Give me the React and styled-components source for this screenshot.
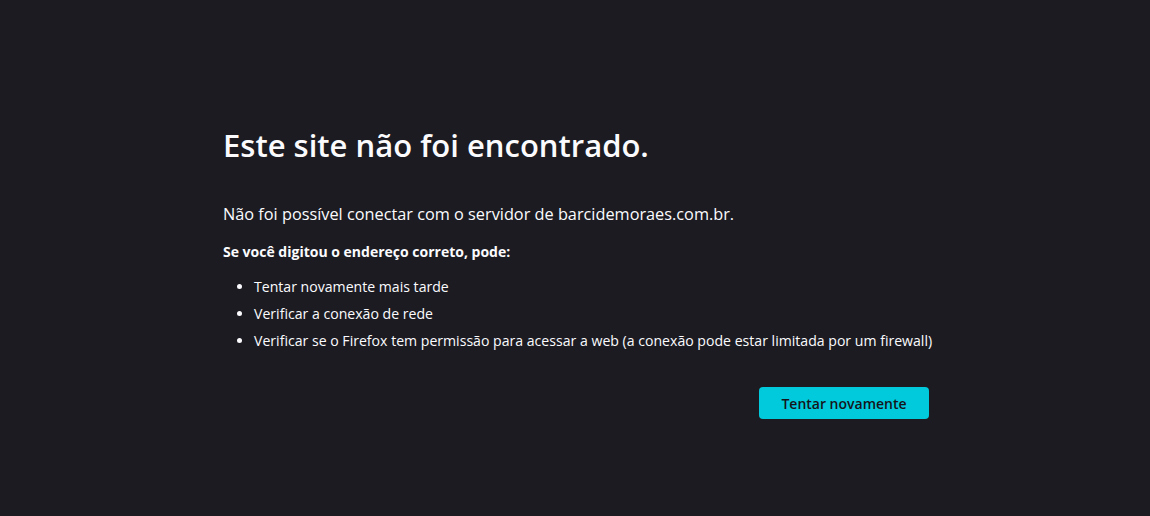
import React from "react";
import styled, { createGlobalStyle } from "styled-components";

const Global = createGlobalStyle`
  html, body { margin: 0; padding: 0; background: #1c1b22; }
  body { font-family: "Open Sans", "Noto Sans", sans-serif; color: #fbfbfe; }
`;

const Page = styled.main`
  min-height: 516px;
  box-sizing: border-box;
  padding: 122px 0 0 223px;
`;

const Container = styled.div`
  width: 706px;
  display: flex;
  flex-direction: column;
`;

const Title = styled.h1`
  margin: 0;
  font-size: 31px;
  font-weight: 600;
  line-height: 46px;
`;

const Lead = styled.p`
  margin: 34px 0 0;
  font-size: 16.3px;
  line-height: 24px;
`;

const Sub = styled.p`
  margin: 16px 0 0;
  font-size: 14px;
  font-weight: 700;
  line-height: 20px;
`;

const List = styled.ul`
  margin: 15px 0 0;
  padding: 0 0 0 31px;
  display: flex;
  flex-direction: column;
  gap: 7px;
`;

const Item = styled.li`
  font-size: 14.1px;
  line-height: 20px;
  white-space: nowrap;
`;

const Actions = styled.div`
  display: flex;
  justify-content: flex-end;
  margin-top: 36px;
`;

const Button = styled.button`
  width: 170px;
  height: 32px;
  border: none;
  border-radius: 4px;
  background: #00cadb;
  color: #15141a;
  font-family: "Open Sans", "Noto Sans", sans-serif;
  font-size: 14px;
  font-weight: 600;
  cursor: pointer;
`;

export default function App() {
  return (
    <>
      <Global />
      <Page>
        <Container>
          <Title>Este site não foi encontrado.</Title>
          <Lead>Não foi possível conectar com o servidor de barcidemoraes.com.br.</Lead>
          <Sub>Se você digitou o endereço correto, pode:</Sub>
          <List>
            <Item>Tentar novamente mais tarde</Item>
            <Item>Verificar a conexão de rede</Item>
            <Item>Verificar se o Firefox tem permissão para acessar a web (a conexão pode estar limitada por um firewall)</Item>
          </List>
          <Actions>
            <Button>Tentar novamente</Button>
          </Actions>
        </Container>
      </Page>
    </>
  );
}
